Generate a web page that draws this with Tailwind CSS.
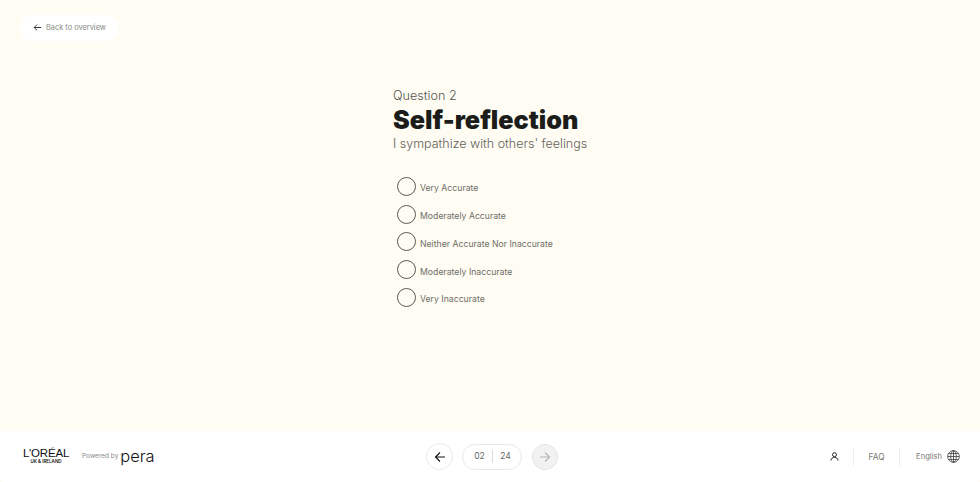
<!DOCTYPE html>
<html lang="en">
<head>
    <meta charset="UTF-8">
    <title>Self-reflection</title>
    <script src="https://cdn.jsdelivr.net/npm/@tailwindcss/browser@4"></script>
</head>
<body class="bg-[#fffcf3] font-['Inter',sans-serif]">
    <div class="h-[482px] w-[980px] flex flex-col overflow-hidden">
        <!-- Main -->
        <main class="h-[431px] relative">
            <a class="absolute left-[20px] top-[15px] h-[26px] w-[99px] flex items-center pl-[13px] pb-[1px] gap-[4px] bg-white rounded-full text-[7.4px] text-[#8a8a86]">
                <svg class="w-[9px] h-[9px]" viewBox="0 0 10 10" fill="none" stroke="#222" stroke-width="1"><path d="M9 5H1.5M4.5 1.8 1.3 5l3.2 3.2"/></svg>
                Back to overview
            </a>
            <div class="pt-[88px] pl-[393px]">
                <p class="text-[12.6px] leading-[16px] text-[#55554f] font-light">Question 2</p>
                <h1 class="text-[25.2px] leading-[30px] font-black text-[#1c1c1a] mt-[1px]">Self-reflection</h1>
                <p class="text-[12.5px] leading-[18px] text-[#62625c] font-light">I sympathize with others' feelings</p>
                <div class="mt-[24px] ml-[4px] flex flex-col gap-[8.7px]">
                    <label class="flex items-center gap-[4px] h-[19px] text-[8.7px] text-[#6e6e68]"><span class="w-[19px] h-[19px] rounded-full border border-[#5a5a55]"></span><span class="pt-[5px]">Very Accurate</span></label>
                    <label class="flex items-center gap-[4px] h-[19px] text-[8.7px] text-[#6e6e68]"><span class="w-[19px] h-[19px] rounded-full border border-[#5a5a55]"></span><span class="pt-[5px]">Moderately Accurate</span></label>
                    <label class="flex items-center gap-[4px] h-[19px] text-[8.7px] text-[#6e6e68]"><span class="w-[19px] h-[19px] rounded-full border border-[#5a5a55]"></span><span class="pt-[5px]">Neither Accurate Nor Inaccurate</span></label>
                    <label class="flex items-center gap-[4px] h-[19px] text-[8.7px] text-[#6e6e68]"><span class="w-[19px] h-[19px] rounded-full border border-[#5a5a55]"></span><span class="pt-[5px]">Moderately Inaccurate</span></label>
                    <label class="flex items-center gap-[4px] h-[19px] text-[8.7px] text-[#6e6e68]"><span class="w-[19px] h-[19px] rounded-full border border-[#5a5a55]"></span><span class="pt-[5px]">Very Inaccurate</span></label>
                </div>
            </div>
        </main>
        <!-- Footer -->
        <footer class="h-[51px] bg-white flex items-center relative rounded-b-[4px]">
            <div class="w-[426px] flex items-center pl-[23px]">
                <div class="w-[46px] flex flex-col items-center text-[#111]">
                    <span class="text-[11.5px] leading-[10px] tracking-[-0.2px] font-['Liberation_Sans',sans-serif]">L'ORÉAL</span>
                    <span class="text-[4.5px] leading-[7px] font-semibold">UK &amp; IRELAND</span>
                </div>
                <span class="ml-[13px] text-[6.5px] text-[#8a8a86]">Powered by</span>
                <span class="ml-[2px] pb-[2px] text-[16.4px] leading-[14px] text-[#111] font-light">pera</span>
            </div>
            <div class="flex items-center">
                <button class="w-[27px] h-[27px] rounded-full border border-[#e8e8e6] flex items-center justify-center">
                    <svg class="w-[12px] h-[12px]" viewBox="0 0 12 12" fill="none" stroke="#111" stroke-width="1.1"><path d="M11 6H1.5M6 1.5 1.5 6 6 10.5"/></svg>
                </button>
                <div class="ml-[9px] w-[60px] h-[26px] pl-[1px] rounded-full border border-[#e8e8e6] flex items-center justify-center text-[8.5px] text-[#666660]">
                    <span class="w-[25px] text-center">02</span>
                    <span class="w-px h-[13px] bg-[#ddd]"></span>
                    <span class="w-[25px] text-center">24</span>
                </div>
                <button class="ml-[10px] w-[26px] h-[26px] rounded-full border border-[#e3e3e1] bg-[#f2f2f2] flex items-center justify-center">
                    <svg class="w-[12px] h-[12px]" viewBox="0 0 12 12" fill="none" stroke="#b5b5b3" stroke-width="1.1"><path d="M1 6h9.5M6 1.5 10.5 6 6 10.5"/></svg>
                </button>
            </div>
            <div class="ml-auto flex items-center h-[18px] pr-[20px] text-[8.4px] text-[#777771]">
                <svg class="w-[9px] h-[9px] mr-[14px]" viewBox="0 0 10 10" fill="none" stroke="#222" stroke-width="1.1"><circle cx="5" cy="3" r="2.2"/><path d="M1 9.5C1.3 7 3 6 5 6s3.7 1 4 3.5"/></svg>
                <span class="w-px h-[18px] bg-[#eeeeec]"></span>
                <span class="ml-[15px] mr-[14.5px] pt-[2px]">FAQ</span>
                <span class="w-px h-[18px] bg-[#eeeeec]"></span>
                <span class="ml-[16px] pt-[1px] text-[7.6px]">English</span>
                <svg class="w-[13px] h-[13px] ml-[5px]" viewBox="0 0 14 14" fill="none" stroke="#333" stroke-width="0.8"><circle cx="7" cy="7" r="6.3"/><ellipse cx="7" cy="7" rx="3" ry="6.3"/><path d="M7 .7v12.6M.7 7h12.6M1.6 3.8h10.8M1.6 10.2h10.8"/></svg>
            </div>
        </footer>
    </div>
</body>
</html>
